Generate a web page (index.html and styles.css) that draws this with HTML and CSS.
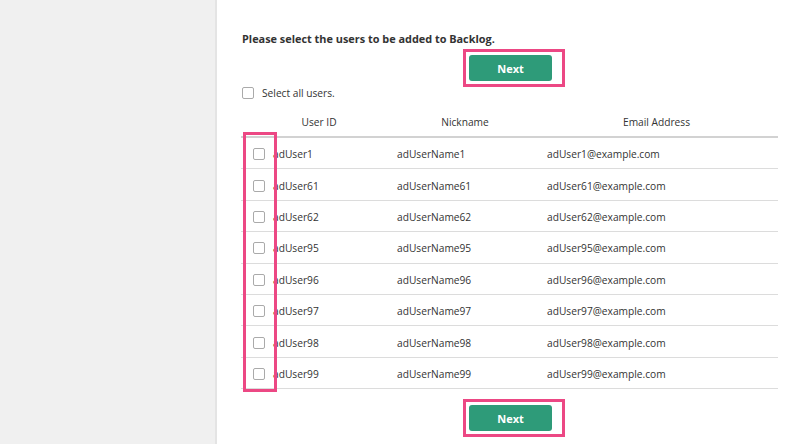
FILE: index.html
```html
<!DOCTYPE html>
<html>
<head>
<meta charset="utf-8">
<link rel="stylesheet" href="styles.css">
</head>
<body>
<div class="page">
  <aside class="sidebar"></aside>
  <main class="main">
    <h1 class="title">Please select the users to be added to Backlog.</h1>
    <div class="actions top">
      <div class="hl"><button class="btn">Next</button></div>
    </div>
    <label class="select-all"><span class="cb"></span><span>Select all users.</span></label>
    <div class="table">
      <div class="thead">
        <div class="th c1">User ID</div>
        <div class="th c2">Nickname</div>
        <div class="th c3">Email Address</div>
      </div>
      <div class="tr"><div class="td c1"><span class="cb"></span>adUser1</div><div class="td c2">adUserName1</div><div class="td c3">adUser1@example.com</div></div>
      <div class="tr"><div class="td c1"><span class="cb"></span>adUser61</div><div class="td c2">adUserName61</div><div class="td c3">adUser61@example.com</div></div>
      <div class="tr"><div class="td c1"><span class="cb"></span>adUser62</div><div class="td c2">adUserName62</div><div class="td c3">adUser62@example.com</div></div>
      <div class="tr"><div class="td c1"><span class="cb"></span>adUser95</div><div class="td c2">adUserName95</div><div class="td c3">adUser95@example.com</div></div>
      <div class="tr"><div class="td c1"><span class="cb"></span>adUser96</div><div class="td c2">adUserName96</div><div class="td c3">adUser96@example.com</div></div>
      <div class="tr"><div class="td c1"><span class="cb"></span>adUser97</div><div class="td c2">adUserName97</div><div class="td c3">adUser97@example.com</div></div>
      <div class="tr"><div class="td c1"><span class="cb"></span>adUser98</div><div class="td c2">adUserName98</div><div class="td c3">adUser98@example.com</div></div>
      <div class="tr"><div class="td c1"><span class="cb"></span>adUser99</div><div class="td c2">adUserName99</div><div class="td c3">adUser99@example.com</div></div>
      <div class="col-hl"></div>
    </div>
    <div class="actions bottom">
      <div class="hl"><button class="btn">Next</button></div>
    </div>
  </main>
</div>
</body>
</html>
```
FILE: styles.css
```css
html, body {
  margin: 0;
  padding: 0;
  background: #fff;
}
body {
  font-family: "Open Sans", "Noto Sans", sans-serif;
  color: #333;
  font-size: 10.2px;
}
.page {
  display: flex;
  height: 444px;
  overflow: hidden;
}
.sidebar {
  width: 215px;
  flex: none;
  background: #f0f0f0;
  border-right: 2px solid #e4e4e4;
}
.main {
  padding-left: 24px;
  width: 537px;
}
.title {
  margin: 0;
  padding-top: 31px;
  font-size: 10.9px;
  font-weight: 700;
  line-height: 16px;
  padding-left: 1px;
}
.actions {
  display: flex;
  justify-content: center;
}
.actions.top {
  margin-top: 2px;
}
.actions.bottom {
  margin-top: 10px;
}
.hl {
  border: 3px solid #ec4884;
  padding: 3px 10px 3px 3px;
  margin-left: 9px;
}
.btn {
  display: block;
  width: 83px;
  height: 26px;
  border: none;
  border-radius: 3px;
  background: #2e9b79;
  color: #fff;
  font-family: "Open Sans", "Noto Sans", sans-serif;
  font-weight: 700;
  font-size: 11px;
  padding: 0;
}
.cb {
  display: inline-block;
  width: 10px;
  height: 10px;
  border: 1px solid #aaa;
  border-radius: 2px;
  background: #fff;
  flex: none;
}
.select-all {
  display: flex;
  align-items: center;
  gap: 8px;
  height: 16px;
  margin-top: -2px;
  padding-left: 1px;
}
.table {
  position: relative;
  margin-top: 6px;
}
.thead {
  display: grid;
  grid-template-columns: 146px 150px 241px;
  height: 29px;
  align-items: center;
  border-bottom: 2px solid #d2d2d2;
}
.th {
  text-align: center;
  padding-top: 1px;
}
.th.c1 { padding-left: 10px; }
.th.c2 { padding-left: 6px; }
.th.c3 { padding-right: 2px; }
.tr {
  display: grid;
  grid-template-columns: 146px 150px 241px;
  height: 30.4px;
  align-items: center;
  border-bottom: 1px solid #dcdcdc;
}
.td {
  padding-left: 10px;
  padding-top: 2px;
  white-space: nowrap;
}
.td.c1 {
  display: flex;
  align-items: center;
  gap: 8px;
  padding-left: 12px;
}
.col-hl {
  position: absolute;
  left: 2px;
  top: 25px;
  width: 28px;
  height: 254px;
  border: 3px solid #ec4884;
  pointer-events: none;
}
```
